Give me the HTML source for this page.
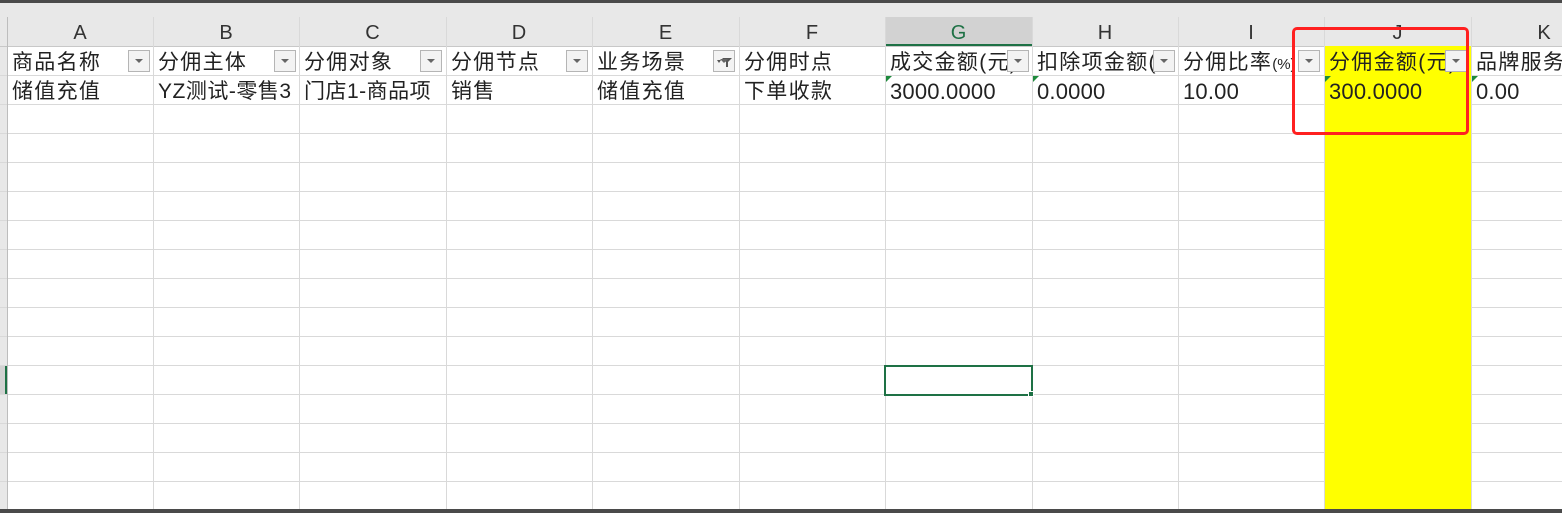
<!DOCTYPE html>
<html><head><meta charset="utf-8"><style>
body{margin:0;width:1562px;height:513px;overflow:hidden;background:#fff;position:relative;font-family:"Liberation Sans","Noto Sans CJK SC",sans-serif}
div{position:absolute;box-sizing:border-box}
.hl{left:0;width:1562px;height:1px;background:#d9d9d9}
.vl{width:1px;background:#d9d9d9;top:17px;height:493px}
.ch{top:18px;height:28px;font-size:20px;color:#333;text-align:center;line-height:31px}
.t{font-size:21px;color:#222;white-space:nowrap;overflow:hidden;line-height:33px;padding-left:4px;letter-spacing:1.3px}
.n{font-size:22px;letter-spacing:0.2px}
.btn{width:22px;height:22px;border:1px solid #b5b5b5;background:#f3f3f3}
.btn::after{content:"";position:absolute;left:6px;top:8px;border-left:4px solid transparent;border-right:4px solid transparent;border-top:4px solid #666}
.tri{width:0;height:0;border-top:6px solid #1e8a3c;border-right:6px solid transparent}
</style></head><body>
<div style="left:0;top:0;width:1562px;height:46px;background:#e8e8e8"></div>
<div style="left:0;top:0;width:1562px;height:3px;background:#4a4a4a"></div>
<div style="left:0;top:46px;width:7px;height:464px;background:#e8e8e8"></div>
<div style="left:0;top:366px;width:7px;height:29px;background:#d2d2d2;border-right:2px solid #1e7145"></div>
<div style="left:885px;top:17px;width:147px;height:29px;background:#d2d2d2;border-bottom:2px solid #1e7145"></div>
<div class="hl" style="top:46px;background:#c8c8c8"></div>
<div class="hl" style="top:75px"></div><div class="hl" style="top:104px"></div><div class="hl" style="top:133px"></div><div class="hl" style="top:162px"></div><div class="hl" style="top:191px"></div><div class="hl" style="top:220px"></div><div class="hl" style="top:249px"></div><div class="hl" style="top:278px"></div><div class="hl" style="top:307px"></div><div class="hl" style="top:336px"></div><div class="hl" style="top:365px"></div><div class="hl" style="top:394px"></div><div class="hl" style="top:423px"></div><div class="hl" style="top:452px"></div><div class="hl" style="top:481px"></div>
<div style="left:1324px;top:46px;width:147px;height:464px;background:#ffff00"></div>
<div class="vl" style="left:7px;background:#bdbdbd"></div><div class="vl" style="left:153px"></div><div class="vl" style="left:299px"></div><div class="vl" style="left:446px"></div><div class="vl" style="left:592px"></div><div class="vl" style="left:739px"></div><div class="vl" style="left:885px"></div><div class="vl" style="left:1032px"></div><div class="vl" style="left:1178px"></div><div class="vl" style="left:1324px"></div><div class="vl" style="left:1471px"></div>
<div class="ch" style="left:7px;width:146px">A</div><div class="ch" style="left:153px;width:146px">B</div><div class="ch" style="left:299px;width:147px">C</div><div class="ch" style="left:446px;width:146px">D</div><div class="ch" style="left:592px;width:147px">E</div><div class="ch" style="left:739px;width:146px">F</div><div class="ch" style="left:885px;width:147px;color:#1e7145">G</div><div class="ch" style="left:1032px;width:146px">H</div><div class="ch" style="left:1178px;width:146px">I</div><div class="ch" style="left:1324px;width:147px">J</div><div class="ch" style="left:1471px;width:146px">K</div>
<div class="t" style="left:8px;top:46px;width:145px">商品名称</div>
<div class="t" style="left:154px;top:46px;width:145px">分佣主体</div>
<div class="t" style="left:300px;top:46px;width:146px">分佣对象</div>
<div class="t" style="left:447px;top:46px;width:145px">分佣节点</div>
<div class="t" style="left:593px;top:46px;width:146px">业务场景</div>
<div class="t" style="left:740px;top:46px;width:145px">分佣时点</div>
<div class="t" style="left:886px;top:46px;width:146px">成交金额(元)</div>
<div class="t" style="left:1033px;top:46px;width:145px">扣除项金额(</div>
<div class="t" style="left:1179px;top:46px;width:145px">分佣比率<span style="font-size:15px;letter-spacing:0">(%)</span></div>
<div class="t" style="left:1325px;top:46px;width:146px">分佣金额(元)</div>
<div class="t" style="left:1472px;top:46px;width:100px">品牌服务</div>
<div class="btn" style="left:128px;top:50px"></div><div class="btn" style="left:274px;top:50px"></div><div class="btn" style="left:420px;top:50px"></div><div class="btn" style="left:566px;top:50px"></div>
<div class="btn" style="left:713px;top:50px"><svg width="20" height="20" style="position:absolute;left:0;top:0;background:#f3f3f3"><path d="M8 7h10l-4 4v5h-2v-5z M3 9h4l-2 3z" fill="#555"/></svg></div>
<div class="btn" style="left:1007px;top:50px"></div><div class="btn" style="left:1153px;top:50px"></div><div class="btn" style="left:1298px;top:50px"></div><div class="btn" style="left:1445px;top:50px"></div>
<div class="t" style="left:8px;top:75px;width:145px">储值充值</div>
<div class="t" style="left:154px;top:75px;width:145px;letter-spacing:0.5px">YZ测试-零售3</div>
<div class="t" style="left:300px;top:75px;width:146px;letter-spacing:0.5px">门店1-商品项</div>
<div class="t" style="left:447px;top:75px;width:145px">销售</div>
<div class="t" style="left:593px;top:75px;width:146px">储值充值</div>
<div class="t" style="left:740px;top:75px;width:145px">下单收款</div>
<div class="t n" style="left:886px;top:75px;width:146px">3000.0000</div>
<div class="t n" style="left:1033px;top:75px;width:145px">0.0000</div>
<div class="t n" style="left:1179px;top:75px;width:145px">10.00</div>
<div class="t n" style="left:1325px;top:75px;width:146px">300.0000</div>
<div class="t n" style="left:1472px;top:75px;width:90px">0.00</div>
<div class="tri" style="left:886px;top:76px"></div><div class="tri" style="left:1033px;top:76px"></div><div class="tri" style="left:1325px;top:76px"></div><div class="tri" style="left:1472px;top:76px"></div>
<div style="left:1292px;top:27px;width:177px;height:108px;border:3px solid #ff2020;border-radius:5px"></div>
<div style="left:884px;top:365px;width:149px;height:31px;border:2px solid #1e7145"></div>
<div style="left:1028px;top:391px;width:6px;height:6px;background:#1e7145;border:1px solid #fff"></div>
<div style="left:0;top:509px;width:1562px;height:4px;background:#4a4a4a"></div>
</body></html>
